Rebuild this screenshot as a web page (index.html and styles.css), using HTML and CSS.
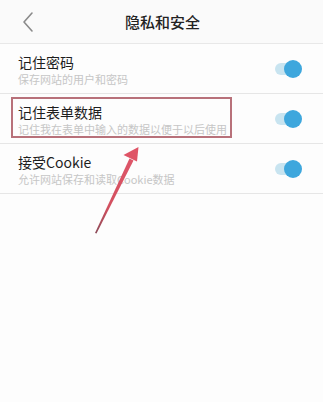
FILE: index.html
```html
<!DOCTYPE html>
<html>
<head>
<meta charset="utf-8">
<link rel="stylesheet" href="styles.css">
</head>
<body>
<div class="screen">
  <header class="header">
    <svg class="back" width="14" height="22" viewBox="0 0 14 22"><path d="M11 2 L3 11 L11 20" fill="none" stroke="#8a8a8a" stroke-width="1.6" stroke-linecap="round" stroke-linejoin="round"/></svg>
    <div class="title">隐私和安全</div>
  </header>
  <div class="list">
    <div class="row">
      <div class="text">
        <div class="name">记住密码</div>
        <div class="desc">保存网站的用户和密码</div>
      </div>
      <div class="toggle"><span class="track"></span><span class="knob"></span></div>
    </div>
    <div class="row">
      <div class="text">
        <div class="name">记住表单数据</div>
        <div class="desc">记住我在表单中输入的数据以便于以后使用</div>
      </div>
      <div class="toggle"><span class="track"></span><span class="knob"></span></div>
      <div class="highlight"></div>
    </div>
    <div class="row">
      <div class="text">
        <div class="name">接受Cookie</div>
        <div class="desc">允许网站保存和读取Cookie数据</div>
      </div>
      <div class="toggle"><span class="track"></span><span class="knob"></span></div>
    </div>
  </div>
  <svg class="arrow" width="323" height="402" viewBox="0 0 323 402">
    <defs>
      <linearGradient id="g" x1="95" y1="233" x2="138" y2="148" gradientUnits="userSpaceOnUse">
        <stop offset="0" stop-color="#8a4a58"/>
        <stop offset="0.3" stop-color="#d2505f"/>
        <stop offset="1" stop-color="#e0566a"/>
      </linearGradient>
    </defs>
    <path d="M95 233 L129.5 158.5 L133.5 160.5 L96.5 233.5 Z" fill="url(#g)"/>
    <path d="M138.5 147 L123.5 155 L137 161.5 Z" fill="#df5466"/>
  </svg>
</div>
</body>
</html>
```
FILE: styles.css
```css
html, body {
  margin: 0;
  padding: 0;
  background: #fdfdfd;
}
.screen {
  position: relative;
  width: 323px;
  height: 402px;
  overflow: hidden;
  font-family: "Noto Sans CJK SC", "Noto Sans", sans-serif;
  background: #fdfdfd;
}
.header {
  position: relative;
  height: 43px;
  display: flex;
  align-items: center;
  justify-content: center;
  border-bottom: 1px solid #e8e8e8;
  background: #fafafa;
}
.back {
  position: absolute;
  left: 21px;
  top: 11px;
}
.title {
  font-size: 15px;
  font-weight: 500;
  color: #222;
  margin-left: 2px;
}
.row {
  position: relative;
  height: 50px;
  box-sizing: border-box;
  border-bottom: 1px solid #e6e6e6;
  display: flex;
  align-items: center;
  padding: 0 21px 0 18px;
}
.text {
  flex: 1;
  display: flex;
  flex-direction: column;
  margin-top: 1px;
}
.name {
  font-size: 14px;
  line-height: 18px;
  color: #1e1e1e;
}
.desc {
  font-size: 11px;
  line-height: 14px;
  color: #c6c6c6;
  margin-top: 1px;
}
.toggle {
  position: relative;
  width: 27px;
  height: 18px;
}
.track {
  position: absolute;
  left: 0;
  top: 3px;
  width: 25px;
  height: 12px;
  border-radius: 6px;
  background: #c8e4f0;
}
.knob {
  position: absolute;
  right: 0;
  top: 0;
  width: 18px;
  height: 18px;
  border-radius: 50%;
  background: #3ea7dd;
}
.highlight {
  position: absolute;
  left: 11px;
  top: 3px;
  width: 221px;
  height: 41px;
  box-sizing: border-box;
  border: 2px solid #b8717a;
}
.arrow {
  position: absolute;
  left: 0;
  top: 0;
  pointer-events: none;
}
```
